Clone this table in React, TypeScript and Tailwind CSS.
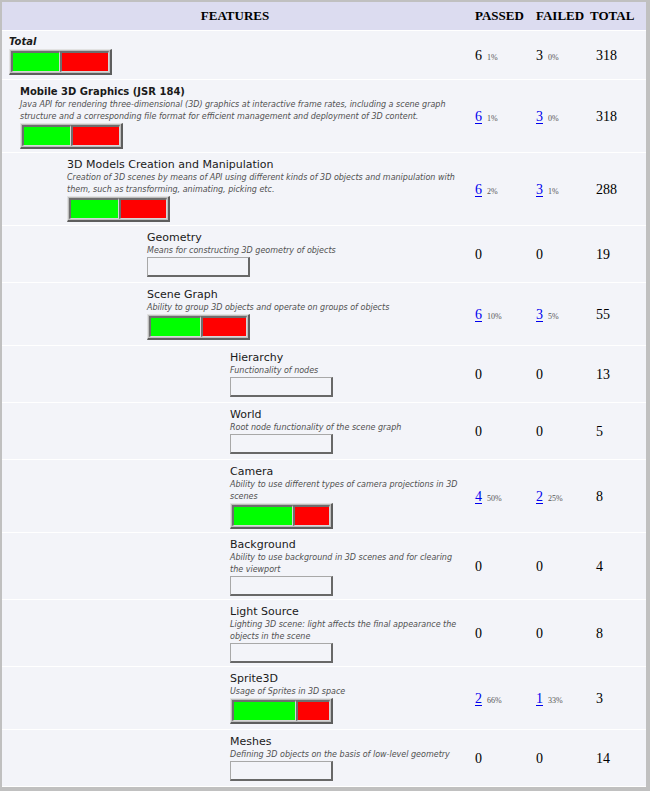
import React from "react";

type Row = {
  name: string;
  indent: number;
  style?: "total" | "group";
  desc?: string[];
  bar?: number; // green cell width in px; undefined = empty bar
  passed: number;
  passedPct?: string;
  failed: number;
  failedPct?: string;
  total: number;
  link?: boolean;
};

const rows: Row[] = [
  { name: "Total", indent: 7, style: "total", bar: 49, passed: 6, passedPct: "1%", failed: 3, failedPct: "0%", total: 318 },
  {
    name: "Mobile 3D Graphics (JSR 184)",
    indent: 18,
    style: "group",
    desc: [
      "Java API for rendering three-dimensional (3D) graphics at interactive frame rates, including a scene graph",
      "structure and a corresponding file format for efficient management and deployment of 3D content.",
    ],
    bar: 49,
    passed: 6,
    passedPct: "1%",
    failed: 3,
    failedPct: "0%",
    total: 318,
    link: true,
  },
  {
    name: "3D Models Creation and Manipulation",
    indent: 65,
    desc: [
      "Creation of 3D scenes by means of API using different kinds of 3D objects and manipulation with",
      "them, such as transforming, animating, picking etc.",
    ],
    bar: 50,
    passed: 6,
    passedPct: "2%",
    failed: 3,
    failedPct: "1%",
    total: 288,
    link: true,
  },
  { name: "Geometry", indent: 145, desc: ["Means for constructing 3D geometry of objects"], passed: 0, failed: 0, total: 19 },
  {
    name: "Scene Graph",
    indent: 145,
    desc: ["Ability to group 3D objects and operate on groups of objects"],
    bar: 52,
    passed: 6,
    passedPct: "10%",
    failed: 3,
    failedPct: "5%",
    total: 55,
    link: true,
  },
  { name: "Hierarchy", indent: 228, desc: ["Functionality of nodes"], passed: 0, failed: 0, total: 13 },
  { name: "World", indent: 228, desc: ["Root node functionality of the scene graph"], passed: 0, failed: 0, total: 5 },
  {
    name: "Camera",
    indent: 228,
    desc: ["Ability to use different types of camera projections in 3D", "scenes"],
    bar: 61,
    passed: 4,
    passedPct: "50%",
    failed: 2,
    failedPct: "25%",
    total: 8,
    link: true,
  },
  {
    name: "Background",
    indent: 228,
    desc: ["Ability to use background in 3D scenes and for clearing", "the viewport"],
    passed: 0,
    failed: 0,
    total: 4,
  },
  {
    name: "Light Source",
    indent: 228,
    desc: ["Lighting 3D scene: light affects the final appearance the", "objects in the scene"],
    passed: 0,
    failed: 0,
    total: 8,
  },
  {
    name: "Sprite3D",
    indent: 228,
    desc: ["Usage of Sprites in 3D space"],
    bar: 64,
    passed: 2,
    passedPct: "66%",
    failed: 1,
    failedPct: "33%",
    total: 3,
    link: true,
  },
  { name: "Meshes", indent: 228, desc: ["Defining 3D objects on the basis of low-level geometry"], passed: 0, failed: 0, total: 14 },
];

function Bar({ green }: { green?: number }) {
  if (green === undefined) {
    return (
      <div className="h-[20px] w-[103px] border-t border-l border-r-2 border-b-2 border-t-[#a8a8a8] border-l-[#a8a8a8] border-r-[#686868] border-b-[#686868]" />
    );
  }
  return (
    <div className="flex h-[26px] w-[103px] border-t border-l border-r-2 border-b-2 border-t-[#e2e2e2] border-l-[#e2e2e2] border-r-[#5e5e5e] border-b-[#5e5e5e] bg-[#bdbdbd] p-px">
      <div
        className="h-full border-t-2 border-l-2 border-r border-b border-t-[#6e6e6e] border-l-[#6e6e6e] border-r-[#d6d6d6] border-b-[#d6d6d6] bg-[#00ff00]"
        style={{ width: green }}
      />
      <div className="h-full flex-1 border-t-2 border-l-2 border-r border-b border-t-[#6e6e6e] border-l-[#6e6e6e] border-r-[#d6d6d6] border-b-[#d6d6d6] bg-[#ff0000]" />
    </div>
  );
}

function Count({ value, pct, link }: { value: number; pct?: string; link?: boolean }) {
  return (
    <div className="flex items-baseline pl-[7px]">
      {link ? (
        <a href="#" className="text-[14px] text-[#0000ee] underline underline-offset-2">
          {value}
        </a>
      ) : (
        <span className="text-[14px] text-black">{value}</span>
      )}
      {pct && <span className="ml-[5px] text-[8px] text-[#555]">{pct}</span>}
    </div>
  );
}

export default function App() {
  return (
    <div className="h-[791px] w-[650px] overflow-hidden bg-[#c0c0c0] pt-[2px] pl-[2px] pr-[4px]">
      <div className="flex flex-col gap-px border-b border-white bg-white">
        {/* header */}
        <div className="grid h-[28px] grid-cols-[466px_62px_60px_56px] items-center bg-[#dcdcf0] font-['Liberation_Serif',serif] text-[13px] font-bold text-black">
          <div className="text-center">FEATURES</div>
          <div className="pl-[7px]">PASSED</div>
          <div className="pl-[6px]">FAILED</div>
          <div className="pl-0">TOTAL</div>
        </div>

        {rows.map((r) => {
          const lines = r.desc?.length ?? 0;
          // the old table packs two-line rows a bit tighter than one-line rows
          const pad = lines > 1 ? "pt-[4px] pb-[3px]" : lines === 1 ? "pt-[4px] pb-[5px]" : "pt-[4px] pb-[4px]";
          return (
            <div key={r.name} className="grid grid-cols-[466px_62px_60px_56px] items-center bg-[#f3f4f9]">
              <div className={pad} style={{ paddingLeft: r.indent }}>
                <div
                  className={
                    r.style === "total"
                      ? "h-[14px] font-['DejaVu_Sans',sans-serif] text-[10px] leading-[13px] font-bold italic text-[#1a1a1a]"
                      : r.style === "group"
                        ? "h-[15px] font-['DejaVu_Sans',sans-serif] text-[10px] leading-[15px] font-bold text-[#1a1a1a]"
                        : "h-[15px] font-['DejaVu_Sans',sans-serif] text-[11px] leading-[15px] text-[#1a1a1a]"
                  }
                >
                  {r.name}
                </div>
                {r.desc && (
                  <div className="font-['DejaVu_Sans',sans-serif] text-[8px] leading-[12px] whitespace-nowrap text-[#505050] italic">
                    {r.desc.map((line) => (
                      <div key={line}>{line}</div>
                    ))}
                  </div>
                )}
                <Bar green={r.bar} />
              </div>
              <div className="font-['Liberation_Serif',serif]">
                <Count value={r.passed} pct={r.passedPct} link={r.link} />
              </div>
              <div className="font-['Liberation_Serif',serif]">
                <div className="-ml-px">
                  <Count value={r.failed} pct={r.failedPct} link={r.link} />
                </div>
              </div>
              <div className="pl-[6px] font-['Liberation_Serif',serif] text-[14px] text-black">{r.total}</div>
            </div>
          );
        })}
      </div>
    </div>
  );
}
